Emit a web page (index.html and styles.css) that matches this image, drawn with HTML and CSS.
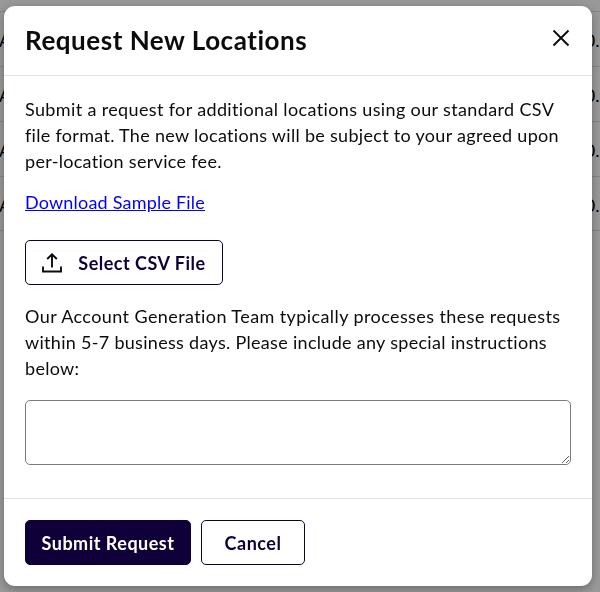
FILE: index.html
```html
<!DOCTYPE html>
<html lang="en">
<head>
    <meta charset="UTF-8" />
    <meta name="viewport" content="width=device-width, initial-scale=1" />
    <title>Request New Locations</title>
    <link rel="stylesheet" href="styles.css">
</head>
<body>
<div class="page">
    <div class="row"><span>A</span><span>0...</span></div>
    <div class="row"><span>A</span><span>0...</span></div>
    <div class="row"><span>A</span><span>0...</span></div>
    <div class="row"><span>A</span><span>0...</span></div>
</div>

<div class="overlay">
    <div class="modal" role="dialog" aria-labelledby="modal-title">
        <header class="modal-header">
            <h1 id="modal-title">Request New Locations</h1>
            <button class="close" type="button" aria-label="Close">
                <svg viewBox="0 0 18 18"><path d="M1.5 1.5 L16.5 16.5 M16.5 1.5 L1.5 16.5"/></svg>
            </button>
        </header>

        <div class="modal-body">
            <p class="intro">Submit a request for additional locations using our standard CSV<br>file format. The new locations will be subject to your agreed upon<br>per-location service fee.</p>
            <a class="sample-link" href="#">Download Sample File</a>
            <button class="btn btn-file" type="button">
                <svg viewBox="0 0 20 20"><path d="M1 13.5 V18.5 H19 V13.5 M10 14.5 V1.5 M5.2 6 L10 1.3 L14.8 6"/></svg>
                <span>Select CSV File</span>
            </button>
            <p class="note">Our Account Generation Team typically processes these requests<br>within 5-7 business days. Please include any special instructions<br>below:</p>
            <textarea aria-label="Special instructions"></textarea>
        </div>

        <footer class="modal-footer">
            <button class="btn btn-primary" type="button"><span>Submit Request</span></button>
            <button class="btn btn-cancel" type="button"><span>Cancel</span></button>
        </footer>
    </div>
</div>
</body>
</html>
```
FILE: styles.css
```css
* {
    box-sizing: border-box;
}
body {
    margin: 0;
    height: 592px;
    overflow: hidden;
    background: #999;
    color: #0c0c0c;
    font-family: Lato, sans-serif;
    font-size: 18px;
}
.page {
    padding-top: 11px;
}
.row {
    display: flex;
    justify-content: space-between;
    align-items: center;
    height: 55px;
    margin: 0 -8px 0 -1px;
    padding-top: 2px;
    border-top: 1px solid #858585;
    color: #000;
    white-space: nowrap;
}
.row:last-child {
    border-bottom: 1px solid #858585;
}
.overlay {
    position: fixed;
    inset: 0;
    padding: 6px 8px 6px 4px;
}
.modal {
    display: flex;
    flex-direction: column;
    height: 580px;
    background: #fff;
    border-radius: 11px;
    box-shadow: 0 3px 10px rgba(0,0,0,0.3);
}
.modal-header {
    display: flex;
    align-items: center;
    justify-content: space-between;
    height: 70px;
    padding: 0 22px 2px 21px;
    border-bottom: 1px solid #e3e3e3;
}
h1 {
    margin: 0;
    font-size: 26px;
    font-weight: 700;
    line-height: 32px;
    letter-spacing: 0.53px;
}
.close {
    display: flex;
    padding: 0;
    border: none;
    background: none;
    margin-top: -3px;
}
.close svg {
    width: 18px;
    height: 18px;
}
svg {
    fill: none;
    stroke: #0c0c0c;
    stroke-width: 1.9;
}
.modal-body {
    display: flex;
    flex-direction: column;
    align-items: flex-start;
    flex: 1;
    padding: 20px 21px 0;
}
p {
    margin: 0;
    line-height: 26px;
    white-space: nowrap;
}
.intro {
    letter-spacing: 0.3px;
}
.intro::first-line {
    letter-spacing: 0.36px;
}
.note {
    letter-spacing: 0.3px;
}
.note::first-line {
    letter-spacing: 0.41px;
}
.sample-link {
    margin: 15px 0 25px;
    line-height: 26px;
    letter-spacing: 0.2px;
    color: #00f;
}
.btn {
    display: flex;
    align-items: center;
    justify-content: center;
    height: 45px;
    padding: 0;
    border: 1px solid #10003a;
    border-radius: 5px;
    background: #fff;
    color: #10003a;
    font: 700 18px Lato, sans-serif;
    letter-spacing: 0.5px;
}
.btn-file {
    width: 198px;
    gap: 16px;
    margin-bottom: 18px;
}
.btn-file svg {
    width: 20px;
    height: 20px;
}
textarea {
    display: block;
    width: 100%;
    height: 65px;
    margin-top: 19px;
    border: 1px solid #7c7c80;
    border-radius: 5px;
    background: #fff;
    resize: both;
}
.modal-footer {
    display: flex;
    gap: 10px;
    height: 88px;
    padding: 21px;
    border-top: 1px solid #e3e3e3;
}
.btn-primary {
    width: 166px;
    background: #10003a;
    color: #fff;
}
.btn-cancel {
    width: 104px;
}
```
